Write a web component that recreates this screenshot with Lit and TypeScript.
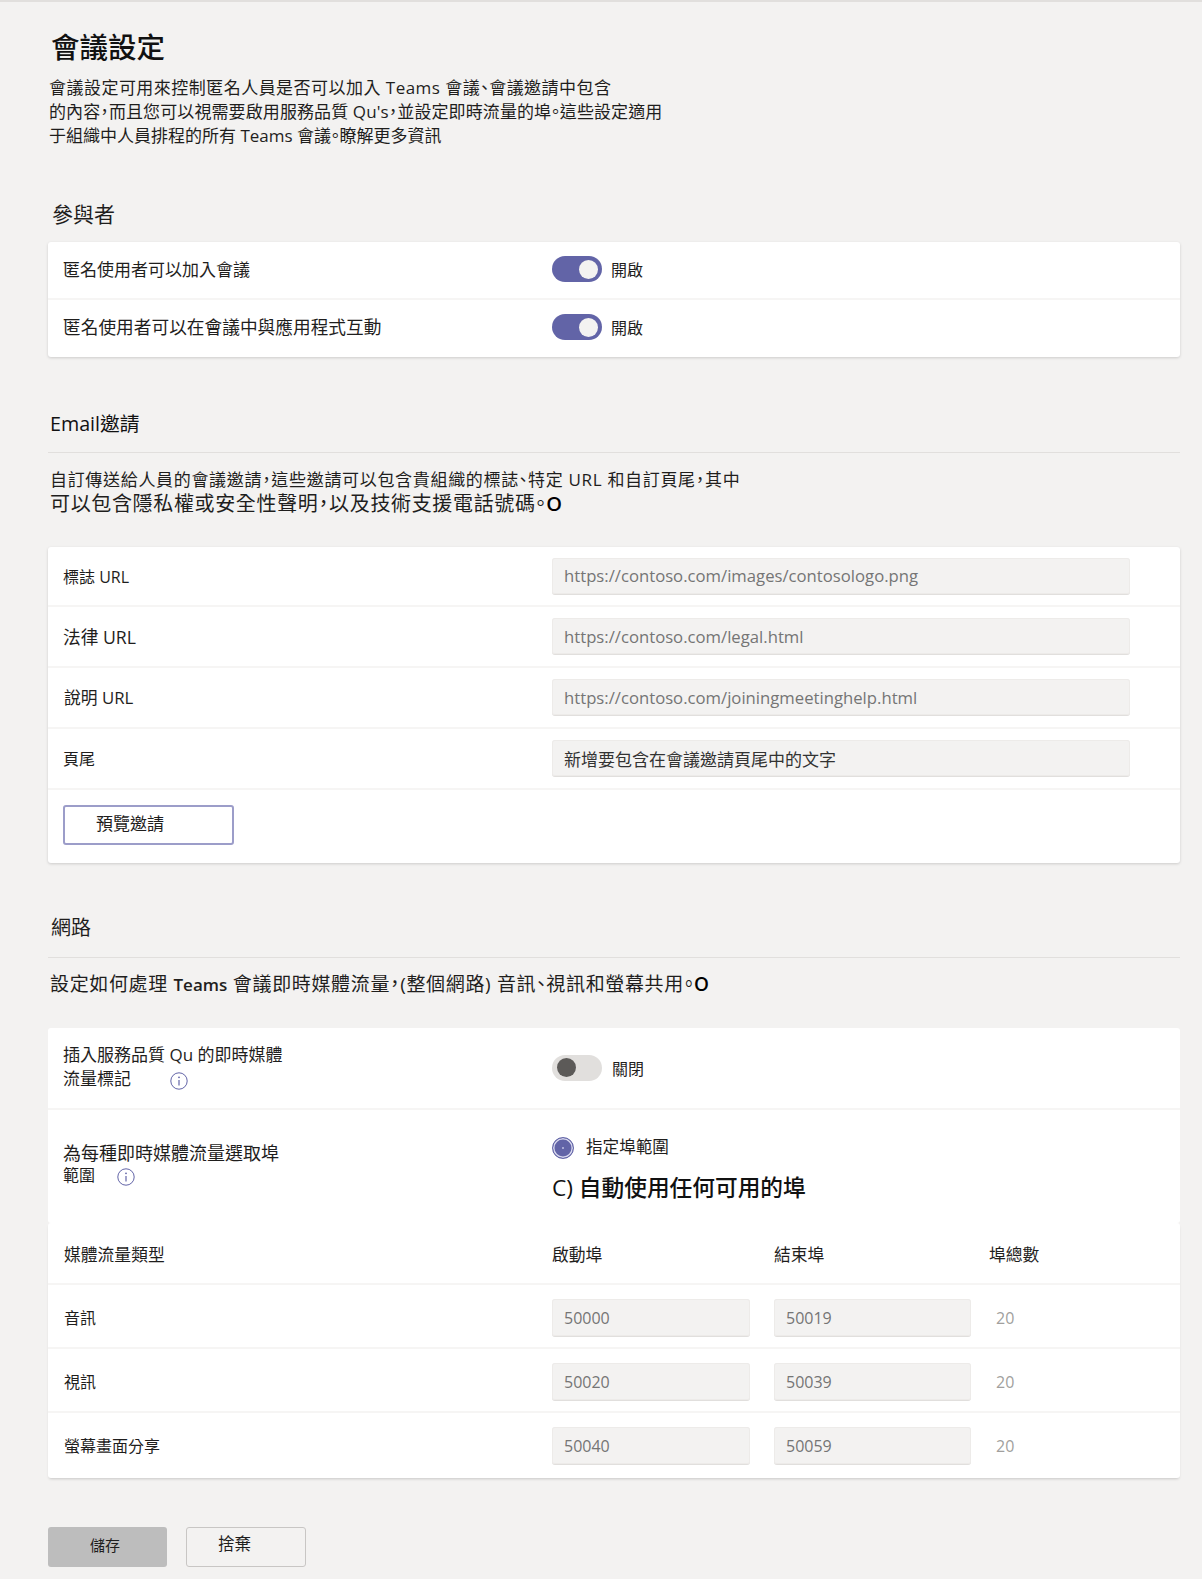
import { LitElement, html, css } from "lit";
import { customElement } from "lit/decorators.js";

const info = html`<svg class="info" viewBox="0 0 18 18" width="18" height="18"><circle cx="9" cy="9" r="8.2" fill="none" stroke="#6264a7" stroke-width="1"/><circle cx="9" cy="5.3" r="0.9" fill="#6264a7"/><path d="M9 8v5.5" stroke="#6264a7" stroke-width="1.2" fill="none"/></svg>`;

@customElement("app-root")
export class AppRoot extends LitElement {
  static styles = css`
    :host { display: block; width: 1202px; height: 1579px; background: #f3f2f1; box-sizing: border-box; border-top: 2px solid #e1dfdd; padding: 0 22px 0 48px; font-family: "Open Sans", "Noto Sans CJK TC", sans-serif; color: #1f1e1d; font-size: 16px; overflow: hidden; font-feature-settings: "palt"; }
    h1 { margin: 26px 0 0 3px; font-size: 28.5px; line-height: 38px; font-weight: 500; color: #111; }
    .intro { margin: 10px 0 0 1px; line-height: 24px; font-size: 17px; height: 72px; white-space: nowrap; }
    .ls1 { letter-spacing: .47px; }
    .ls2 { letter-spacing: .1px; }
    h2 { margin: 0; font-weight: 400; font-size: 20px; line-height: 28px; }
    .h-part { margin: 52px 0 0 4px; }
    .h-part h2 { font-size: 21px; }
    .card { background: #fff; border-radius: 3px; box-shadow: 0 1px 3px rgba(0,0,0,.16); }
    .card1 { margin-top: 14px; }
    .row { display: grid; grid-template-columns: 489px 1fr; align-items: center; padding-left: 15px; border-bottom: 2px solid #f6f5f4; box-sizing: border-box; }
    .row > span { padding-bottom: 2px; }
    .r-a { height: 58px; padding-bottom: 2px; }
    .r-b { height: 57px; border-bottom: 0; padding-bottom: 3px; }
    .l17 { font-size: 17px; }
    .l175 { font-size: 17.7px; }
    .row > .u0 { padding-bottom: 0; }
    .u1 { font-size: 17.7px; }
    .u2 { font-size: 16.8px; padding-left: 1px; }
    .val { display: flex; align-items: center; gap: 9px; }
    .toggle { width: 50px; height: 26px; border-radius: 13px; background: #6264a7; display: flex; align-items: center; justify-content: flex-end; padding: 0 4px; box-sizing: border-box; }
    .toggle i { width: 19px; height: 19px; border-radius: 50%; background: #f3f2f1; display: block; }
    .toggle.off { background: #e1dfdd; justify-content: flex-start; padding: 0 5px; }
    .toggle.off i { background: #5c5a58; }
    .email-h { margin: 53px 0 0 2px; }
    .email-h h2 { font-size: 19.7px; color: #111; }
    .hr { border-top: 1px solid #e1dfdd; }
    .hr1 { margin-top: 14px; }
    .para { line-height: 24px; margin: 0 0 0 2px; white-space: nowrap; }
    .para1 { margin-top: 15px; font-size: 17px; height: 48px; letter-spacing: .68px; }
    .big { font-size: 20px; letter-spacing: .65px; }
    .o { color: #000; font-weight: 600; }
    .card2 { margin-top: 31px; }
    .h60 { height: 60px; }
    .h61 { height: 61px; }
    .field { width: 578px; height: 37px; background: #f3f2f1; border-radius: 3px; border-bottom: 1px solid #e1dfdd; box-sizing: border-box; padding: 0 11px 0 12px; display: flex; align-items: center; color: #757575; font-size: 16.7px; box-shadow: inset 0 0 0 1px #edebe9; }
    .field.dark { color: #333; font-size: 17px; }
    .btn-row { height: 73px; padding: 15px 15px 0; box-sizing: border-box; }
    .preview { width: 171px; height: 40px; box-sizing: border-box; border: 2px solid #9c9dc9; border-radius: 3px; background: #fff; padding: 0 0 5px 31px; display: flex; align-items: center; font-size: 17px; }
    .net-h { margin: 51px 0 0 3px; }
    .hr2 { margin-top: 15px; }
    .para2 { margin-top: 14px; font-size: 19px; height: 24px; letter-spacing: .65px; }
    .para2 b { font-weight: 600; font-size: 17px; letter-spacing: 0; }
    .card3 { margin-top: 32px; height: 195px; box-shadow: none; }
    .top { height: 82px; padding-bottom: 1px; }
    .top .val { gap: 10px; }
    .top .lab { line-height: 24px; font-size: 17px; white-space: nowrap; padding-bottom: 1px; }
    .bottom { height: 113px; align-items: start; border-bottom: 0; }
    .bottom .lab { line-height: 21px; margin-top: 33px; font-size: 18px; white-space: nowrap; }
    .small { font-size: 16px; display: inline-block; margin-top: -2px; }
    .info { vertical-align: -5px; margin-left: 39px; }
    .bottom .info { margin-left: 22px; }
    .radio-wrap { padding-top: 25px; }
    .radio { display: flex; align-items: center; gap: 12px; font-size: 16.6px; line-height: 24px; }
    .radio span { padding-bottom: 2px; }
    .dot { width: 22px; height: 22px; border-radius: 50%; background: radial-gradient(circle, #a7a8d3 0 1px, #6264a7 1.5px); border: 1px solid #6264a7; box-shadow: inset 0 0 0 1.5px #d8d8ee; box-sizing: border-box; }
    .c { margin-top: 12px; font-size: 22.7px; line-height: 30px; font-weight: 500; color: #111; }
    .card4 { box-shadow: 0 2px 3px -1px rgba(0,0,0,.18); }
    .pr { display: grid; grid-template-columns: 488px 198px 24px 197px 18px 1fr; align-items: start; padding: 14px 0 0 16px; border-bottom: 2px solid #f6f5f4; box-sizing: border-box; height: 64px; line-height: 39px; }
    .pr.head { height: 62px; font-size: 16.8px; padding-top: 12px; }
    .pr.last { border-bottom: 0; height: 65px; }
    .pr .field { width: auto; height: 38px; font-size: 16px; padding-top: 1px; }
    .num { color: #a19f9d; padding-left: 7px; }
    .actions { display: flex; gap: 19px; margin-top: 49px; }
    .b { width: 119px; height: 40px; box-sizing: border-box; border-radius: 3px; display: flex; align-items: center; }
    .save { background: #bdbdbd; padding: 0 0 6px 42px; font-size: 15px; }
    .discard { border: 1px solid #c8c6c4; padding: 0 0 8px 31px; font-size: 16.5px; width: 120px; }
  `;
  private port(name: string, a: string, b: string, last = false) {
    return html`<div class="pr ${last ? "last" : ""}"><span>${name}</span><div class="field">${a}</div><span></span><div class="field">${b}</div><span></span><span class="num">20</span></div>`;
  }
  render() {
    return html`
      <h1>會議設定</h1>
      <p class="intro"><span class="ls1">會議設定可用來控制匿名人員是否可以加入 Teams 會議、會議邀請中包含</span><br /><span class="ls2">的內容，而且您可以視需要啟用服務品質 Qu's，並設定即時流量的埠。這些設定適用</span><br />于組織中人員排程的所有 Teams 會議。瞭解更多資訊</p>
      <div class="h-part"><h2>參與者</h2></div>
      <div class="card card1">
        <div class="row r-a"><span class="l17">匿名使用者可以加入會議</span><div class="val"><div class="toggle"><i></i></div><span>開啟</span></div></div>
        <div class="row r-b"><span class="l175">匿名使用者可以在會議中與應用程式互動</span><div class="val"><div class="toggle"><i></i></div><span>開啟</span></div></div>
      </div>
      <div class="email-h"><h2>Email邀請</h2></div>
      <div class="hr hr1"></div>
      <p class="para para1">自訂傳送給人員的會議邀請，這些邀請可以包含貴組織的標誌、特定 URL 和自訂頁尾，其中<br /><span class="big">可以包含隱私權或安全性聲明，以及技術支援電話號碼。<span class="o">O</span></span></p>
      <div class="card card2">
        <div class="row h60"><span class="u0">標誌 URL</span><div class="field">https://contoso.com/images/contosologo.png</div></div>
        <div class="row h61"><span class="u1">法律 URL</span><div class="field">https://contoso.com/legal.html</div></div>
        <div class="row h61"><span class="u2">說明 URL</span><div class="field">https://contoso.com/joiningmeetinghelp.html</div></div>
        <div class="row h61"><span>頁尾</span><div class="field dark">新增要包含在會議邀請頁尾中的文字</div></div>
        <div class="btn-row"><div class="preview">預覽邀請</div></div>
      </div>
      <div class="net-h"><h2>網路</h2></div>
      <div class="hr hr2"></div>
      <p class="para para2">設定如何處理 <b>Teams</b> 會議即時媒體流量，(整個網路) 音訊、視訊和螢幕共用。<span class="o">O</span></p>
      <div class="card card3">
        <div class="row top"><div class="lab">插入服務品質 Qu 的即時媒體<br />流量標記${info}</div><div class="val"><div class="toggle off"><i></i></div><span>關閉</span></div></div>
        <div class="row bottom"><div class="lab">為每種即時媒體流量選取埠<br /><span class="small">範圍</span>${info}</div><div class="radio-wrap"><div class="radio"><div class="dot"></div><span>指定埠範圍</span></div><div class="c">C) 自動使用任何可用的埠</div></div></div>
      </div>
      <div class="card card4">
        <div class="pr head"><span>媒體流量類型</span><span>啟動埠</span><span></span><span>結束埠</span><span></span><span>埠總數</span></div>
        ${this.port("音訊", "50000", "50019")}
        ${this.port("視訊", "50020", "50039")}
        ${this.port("螢幕畫面分享", "50040", "50059", true)}
      </div>
      <div class="actions"><div class="b save">儲存</div><div class="b discard">捨棄</div></div>
    `;
  }
}
